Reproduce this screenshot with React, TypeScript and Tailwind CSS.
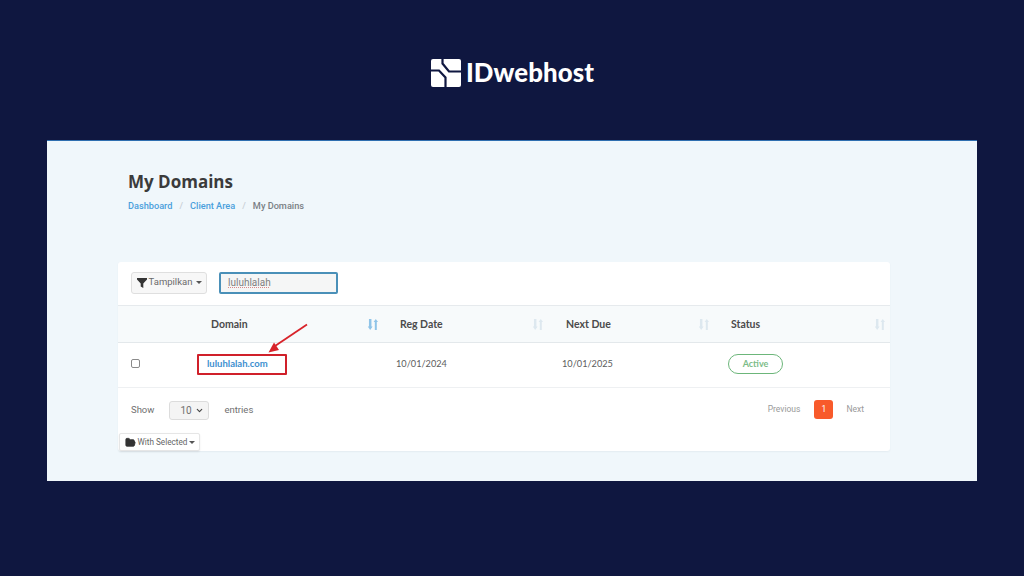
import { ChevronDown, FolderOpen } from "lucide-react";

// small double arrow used in the table header
function SortIcon({ active }: { active?: boolean }) {
  const color = active ? "#8fc4e8" : "#dde8ef";
  return (
    <svg width="12" height="13" viewBox="0 0 12 13" fill="none">
      <path d="M3.2 1v9" stroke={color} strokeWidth="2.5" />
      <path d="M0.8 8.500h4.800L3.200 12z" fill={color} />
      <path d="M8.800 12V3" stroke={color} strokeWidth="2" />
      <path d="M6.600 4h4.400L8.800 1z" fill={color} />
    </svg>
  );
}

function Logo() {
  return (
    <svg width="30" height="28" viewBox="0 0 30 28" fill="none">
      <rect width="30" height="28" rx="2" fill="#fff" />
      <path d="M11.500 0V4.500L18 12.500H30" stroke="#0f1740" strokeWidth="2.200" />
      <path d="M0 11.500H8L14.500 18.500V28" stroke="#0f1740" strokeWidth="2.200" />
    </svg>
  );
}

const headers = [
  { label: "Reg Date", className: "pl-[15px] pr-[7px]" },
  { label: "Next Due", className: "pl-[15px] pr-[6px]" },
  { label: "Status", className: "pl-[15px] pr-[4px]" },
];

export default function App() {
  return (
    <div className="flex h-[576px] w-[1024px] flex-col items-center overflow-hidden bg-[#0f1740] font-['Lato',sans-serif]">
      <div className="mt-[58px] flex h-[29px] items-center gap-[5px] pl-[1px]">
        <Logo />
        <span className="font-['Lato',sans-serif] text-[25.800px] font-black leading-none tracking-[0.1px] text-white">IDwebhost</span>
      </div>

      <div className="relative mt-[53px] h-[341px] w-[930px] border-t border-[#2f6fb0] bg-[#f0f7fb] pl-[71px] pt-[31px]">
        <h1 className="ml-[10px] font-['Open_Sans',sans-serif] text-[17px] font-bold leading-[20px] text-[#3b3b3b]">My Domains</h1>
        <div className="ml-[10px] mt-[8px] flex items-center font-['Roboto',sans-serif] text-[9.200px] font-medium leading-[12px]">
          <span className="text-[#4a9fdc]">Dashboard</span>
          <span className="mx-[7px] text-[#c9d0d6]">/</span>
          <span className="text-[#4a9fdc]">Client Area</span>
          <span className="mx-[7px] text-[#c9d0d6]">/</span>
          <span className="text-[#7a7f85]">My Domains</span>
        </div>

        <div className="mt-[50px] w-[772px] rounded-[3px] bg-white shadow-[0_1px_2px_rgba(30,60,90,0.06)]">
          <div className="flex h-[44px] items-center gap-[12px] border-b border-[#e6eaed] pb-[2px] pl-[13px]">
            <button className="flex h-[22px] w-[76px] items-center justify-center gap-[2px] rounded-[3px] border border-[#dfdfdf] bg-[#f7f7f7] pl-[1px] font-['Roboto',sans-serif] text-[9.500px] text-[#6b6b6b]">
              <svg width="10" height="10" viewBox="0 0 10 10" fill="#333">
                <path d="M0 0h10v1.500L6.300 5.500V10L3.700 8.500v-3L0 1.500z" />
              </svg>
              Tampilkan
              <span className="ml-[2px] border-x-[3px] border-t-[3px] border-x-transparent border-t-[#555]" />
            </button>
            <div className="flex h-[22px] w-[119px] items-center rounded-[2px] border-2 border-[#4a90b8] bg-[#f5f6f6] pl-[7px] font-['Roboto',sans-serif] text-[10px] text-[#808080]">
              <span className="underline decoration-[#d98a8a] decoration-dotted">luluhlalah</span>
            </div>
          </div>

          <div className="grid h-[37px] grid-cols-[82px_185px_166px_165px_174px] items-center border-b border-[#e3e8eb] bg-[#f7fafb] pt-[1px] text-[10.500px] font-bold text-[#4b4b4b]">
            <div />
            <div className="flex items-center justify-between pl-[11px] pr-[6px]">
              <span>Domain</span>
              <SortIcon active />
            </div>
            {headers.map((h) => (
              <div key={h.label} className={`flex items-center justify-between ${h.className}`}>
                <span>{h.label}</span>
                <SortIcon />
              </div>
            ))}
          </div>

          <div className="grid h-[45px] grid-cols-[82px_185px_166px_165px_174px] items-center border-b border-[#eef0f2] pb-[2px] text-[9.200px] text-[#5c5c5c]">
            <div className="pb-[1px] pl-[13px]">
              <div className="h-[9px] w-[9px] rounded-[2px] border border-[#8a8a8a] bg-white" />
            </div>
            <div>
              <div className="-ml-[3px] flex h-[21px] w-[90px] items-center rounded-[1px] border-2 border-[#d0202a] pl-[8px] text-[9.500px] font-bold text-[#3d8fcf]">
                luluhlalah.com
              </div>
            </div>
            <div className="pl-[11px]">10/01/2024</div>
            <div className="pl-[11px]">10/01/2025</div>
            <div className="pl-[12px]">
              <span className="flex h-[20px] w-[55px] items-center justify-center rounded-full border-[1.500px] border-[#6cb67a] text-[9px] font-bold text-[#7cbc88]">
                Active
              </span>
            </div>
          </div>

          <div className="relative h-[63px]">
            <div className="flex items-start justify-between pr-[26px] pt-[13px]">
              <div className="flex h-[19px] items-center pl-[13px] font-['Roboto',sans-serif] text-[9.500px] text-[#707070]">
                <span>Show</span>
                <span className="ml-[15px] flex h-[19px] w-[40px] items-center justify-between rounded-[3px] border border-[#dcdcdc] bg-[#f4f4f4] pl-[10px] pr-[4px] text-[10px]">
                  10
                  <ChevronDown size={9} strokeWidth={3} className="text-[#444]" />
                </span>
                <span className="ml-[15px]">entries</span>
              </div>
              <div className="-mt-[1px] flex h-[19px] items-center font-['Roboto',sans-serif] text-[8.500px] text-[#9a9a9a]">
                <span>Previous</span>
                <span className="ml-[14px] mr-[13px] flex h-[19px] w-[19px] items-center justify-center rounded-[3px] bg-[#f85a2b] text-white">1</span>
                <span>Next</span>
              </div>
            </div>
            <button className="absolute left-[1px] top-[45px] flex h-[18px] w-[81px] items-center justify-center gap-[2px] rounded-[2px] border border-[#e6e6e6] bg-white pl-[1px] font-['Roboto',sans-serif] text-[8.200px] text-[#666] shadow-[0_1px_2px_rgba(0,0,0,0.08)]">
              <FolderOpen size={11} fill="#333" stroke="#333" />
              With Selected
              <span className="border-x-[3px] border-t-[3px] border-x-transparent border-t-[#555]" />
            </button>
          </div>
        </div>

        <svg className="absolute left-[219px] top-[182px]" width="44" height="32" viewBox="0 0 44 32" fill="none">
          <path d="M41 1.500 9 23" stroke="#d8232a" strokeWidth="1.800" />
          <path d="M2.500 29.500 13 27 8 19.500z" fill="#d8232a" />
        </svg>
      </div>
    </div>
  );
}
